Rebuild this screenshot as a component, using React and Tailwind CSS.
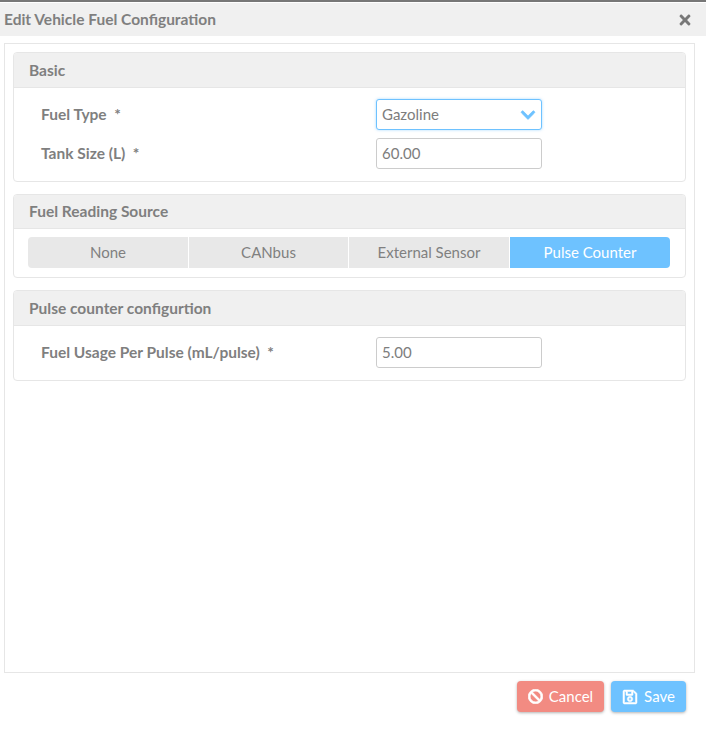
import React from "react";
import { FaTimes, FaChevronDown, FaBan, FaRegSave } from "react-icons/fa";

function Card({ title, headerClass, children, className }) {
  return (
    <section className={`rounded-[4px] border border-[#e6e6e6] overflow-hidden ${className}`}>
      <div className={`flex items-center bg-[#f0f0f0] border-b border-[#e6e6e6] pl-[15px] pr-[15px] text-[15.5px] font-bold text-[#7f7f7f] ${headerClass}`}>
        {title}
      </div>
      {children}
    </section>
  );
}

function Row({ label, children, className }) {
  return (
    <div className={`flex items-center ${className}`}>
      <div className="w-[362px] pl-[27px] text-[15.5px] font-bold text-[#7f7f7f] whitespace-pre">{label}  *</div>
      {children}
    </div>
  );
}

function Field({ value }) {
  return (
    <div className="w-[166px] h-[31px] flex items-center rounded-[3px] border border-[#cccccc] bg-white px-[5px] text-[15px] text-[#7d7d7d]">
      {value}
    </div>
  );
}

export default function App() {
  const tabs = [
    ["None", "w-[160px]"],
    ["CANbus", "w-[159px]"],
    ["External Sensor", "w-[160px]"],
  ];
  return (
    <div className="w-[706px] h-[739px] bg-white flex flex-col font-['Lato','Noto_Sans',sans-serif] overflow-hidden">
      <div className="h-[2px] bg-[#777777] shrink-0" />
      <div className="h-[1px] shrink-0" />
      <header className="h-[33px] shrink-0 bg-[#f0f0f0] flex items-center justify-between pl-[4px] pr-[13px] text-[15.5px] font-bold text-[#7f7f7f]">
        <span>Edit Vehicle Fuel Configuration</span>
        <FaTimes className="w-[16px] h-[16px] text-[#777777]" />
      </header>
      <main className="ml-[4px] mr-[11px] mt-[7px] h-[630px] shrink-0 border border-[#e6e6e6] pt-[8px] px-[8px] flex flex-col gap-[12px]">
        <Card title="Basic" headerClass="h-[35px] pt-[2px]" className="h-[130px]">
          <div className="pt-[11px] flex flex-col gap-[8px]">
            <Row label="Fuel Type">
              <div className="w-[166px] h-[31px] flex items-center justify-between rounded-[3px] border border-[#6ec2ff] shadow-[0_0_3px_rgba(110,194,255,0.6)] bg-white pl-[5px] pr-[5px] text-[15px] text-[#7d7d7d]">
                Gazoline
                <FaChevronDown className="w-[16px] h-[16px] text-[#6ec2ff]" stroke="currentColor" strokeWidth={24} />
              </div>
            </Row>
            <Row label="Tank Size (L)">
              <Field value="60.00" />
            </Row>
          </div>
        </Card>
        <Card title="Fuel Reading Source" headerClass="h-[34px]" className="h-[84px]">
          <div className="pt-[8px] px-[14px] flex gap-px">
            {tabs.map(([t, w], i) => (
              <div key={t} className={`${w} h-[31px] flex items-center justify-center bg-[#e8e8e8] text-[15px] text-[#808080] ${i === 0 ? "rounded-l-[4px]" : ""}`}>
                {t}
              </div>
            ))}
            <div className="w-[160px] h-[31px] flex items-center justify-center bg-[#6ec2ff] rounded-r-[4px] text-[15px] text-white">
              Pulse Counter
            </div>
          </div>
        </Card>
        <Card title="Pulse counter configurtion" headerClass="h-[35px] pt-[2px]" className="h-[91px]">
          <div className="pt-[11px]">
            <Row label="Fuel Usage Per Pulse (mL/pulse)">
              <Field value="5.00" />
            </Row>
          </div>
        </Card>
      </main>
      <footer className="mt-[8px] mr-[20px] flex justify-end gap-[7px]">
        <button className="w-[87px] h-[31px] flex items-center justify-center gap-[6px] rounded-[4px] bg-[#f28b82] text-white text-[15px] shadow-[0_1px_3px_rgba(0,0,0,0.3)]">
          <FaBan className="w-[15px] h-[15px]" stroke="currentColor" strokeWidth={24} />
          Cancel
        </button>
        <button className="w-[75px] h-[31px] flex items-center justify-center gap-[6px] rounded-[4px] bg-[#6ec2ff] text-white text-[15px] shadow-[0_1px_3px_rgba(0,0,0,0.3)]">
          <FaRegSave className="w-[16px] h-[16px]" stroke="currentColor" strokeWidth={16} />
          Save
        </button>
      </footer>
    </div>
  );
}
